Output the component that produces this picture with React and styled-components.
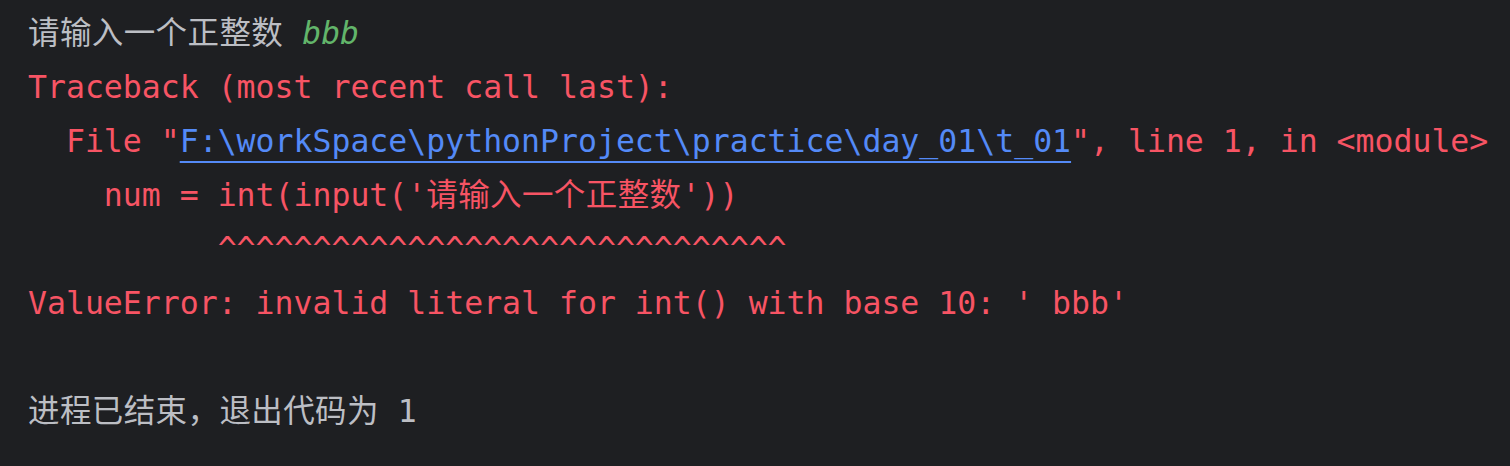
import React from "react";
import styled, { createGlobalStyle } from "styled-components";

const colors = {
    bg: "#1e1f22",
    text: "#bcbec4",
    error: "#f75464",
    input: "#62b56a",
    link: "#548af7",
};

const GlobalStyle = createGlobalStyle`
    html, body {
        margin: 0;
        background: ${colors.bg};
    }
`;

const Console = styled.div`
    box-sizing: border-box;
    width: 1510px;
    height: 466px;
    padding: 6px 0 0 28px;
    background: ${colors.bg};
    font-family: "DejaVu Sans Mono", "Noto Sans CJK SC", monospace;
    font-size: 31.5px;
    line-height: 54px;
    overflow: hidden;
`;

const Line = styled.div`
    white-space: pre;
    height: 54px;
    color: ${({ $kind }) => ($kind === "error" ? colors.error : colors.text)};
`;

// wide glyphs are a touch wider in the IDE's fallback font
const Cjk = styled.span`
    letter-spacing: 0.4px;
`;

const Input = styled.span`
    color: ${colors.input};
    font-style: italic;
`;

// underline sits below the underscores so they stay visible
const Link = styled.span`
    color: ${colors.link};
    text-decoration: underline;
    text-decoration-thickness: 2px;
    text-underline-offset: 9px;
    text-decoration-skip-ink: none;
`;

export default function App() {
    return (
        <>
            <GlobalStyle />
            <Console>
                <Line><Cjk>请输入一个正整数</Cjk> <Input>bbb</Input></Line>
                <Line $kind="error">Traceback (most recent call last):</Line>
                <Line $kind="error">
                    {"  File \""}
                    <Link>F:\workSpace\pythonProject\practice\day_01\t_01</Link>
                    {"\", line 1, in <module>"}
                </Line>
                <Line $kind="error">
                    {"    num = int(input('"}<Cjk>请输入一个正整数</Cjk>{"'))"}
                </Line>
                <Line $kind="error">{"          " + "^".repeat(30)}</Line>
                <Line $kind="error">ValueError: invalid literal for int() with base 10: ' bbb'</Line>
                <Line />
                <Line><Cjk>进程已结束，退出代码为</Cjk> 1</Line>
            </Console>
        </>
    );
}
